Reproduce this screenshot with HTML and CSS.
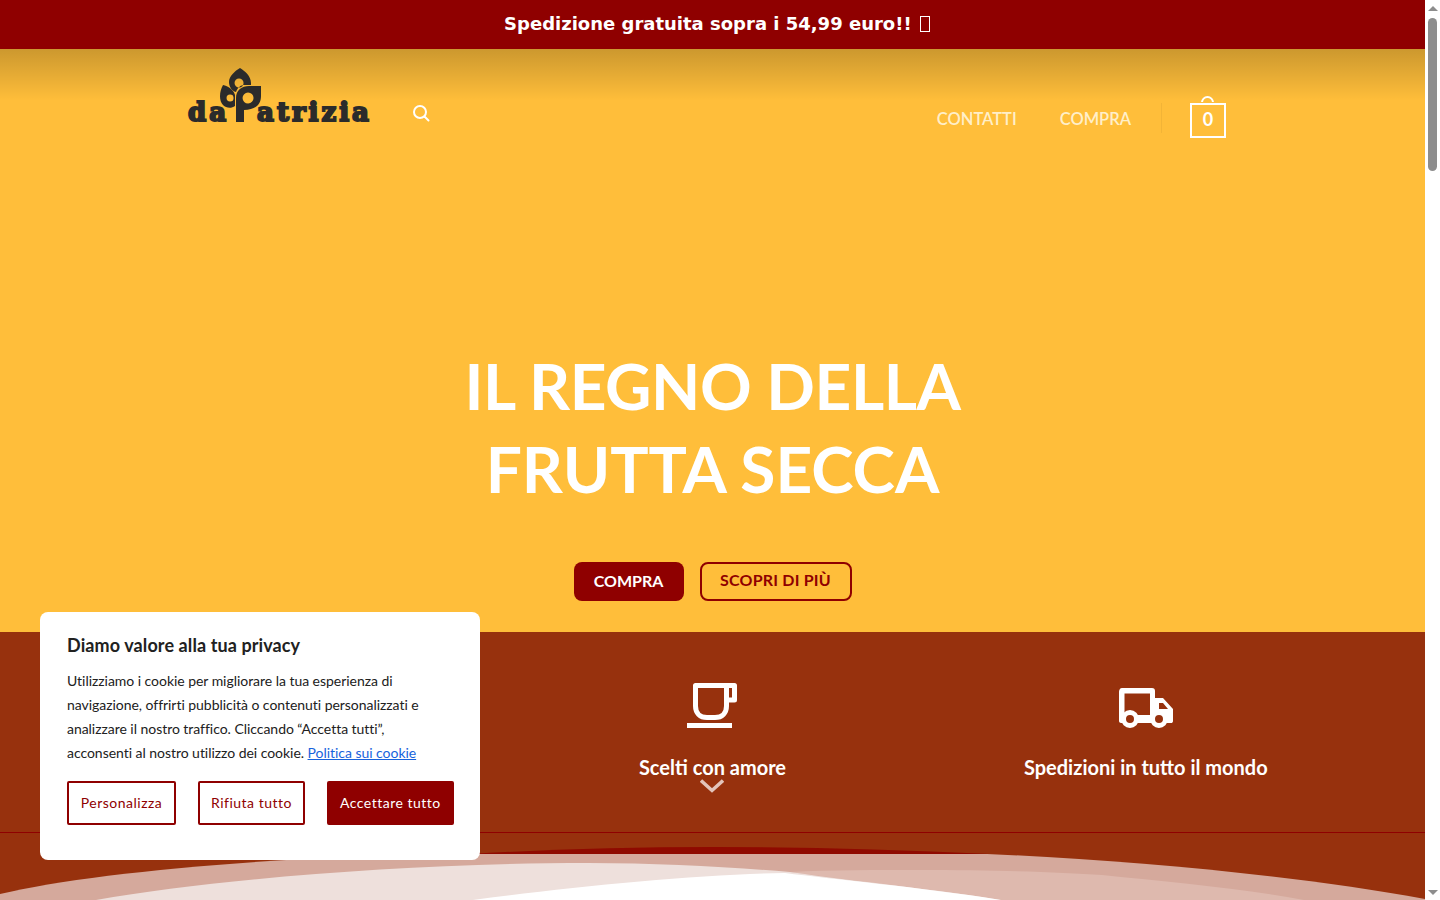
FILE: index.html
```html
<!DOCTYPE html>
<html lang="it">
<head>
    <meta charset="UTF-8">
    <meta name="viewport" content="width=device-width, initial-scale=1.0">
    <title>da Patrizia</title>
    <link rel="stylesheet" href="styles.css">
</head>
<body>
    <div class="page">
        <div class="main">
            <div class="topbar">Spedizione gratuita sopra i 54,99 euro!! <span class="tofu"></span></div>

            <section class="hero">
                <header class="header">
                    <a class="logo" href="#">
                        <span class="logo-text">da</span>
                        <svg class="logo-mark" viewBox="0 0 42 54" width="42" height="54">
                            <path fill="#2b2b2b" fill-rule="evenodd" d="M21 0C26 3 32 8 32 15V17H24C20 18 18 21 17 24C13 23 10 19 10 14C10 8 16 3 21 0ZM20 10.500A4.500 4.500 0 1 0 20.100 19.500A4.500 4.500 0 1 0 20 10.500Z"/>
                            <path fill="#2b2b2b" fill-rule="evenodd" d="M4 17C9 18 15 22 16 27V38C12 41 7 40 4 37C0 33 0 24 4 17ZM11 26.500A3.500 3.500 0 1 0 11.100 33.500A3.500 3.500 0 1 0 11 26.500Z"/>
                            <path fill="#2b2b2b" fill-rule="evenodd" d="M17 54V30C17 22 23 18 30 18H42V28C42 37 36 42 25 42V54ZM29 24.500A5.500 5.500 0 1 0 29.100 35.500A5.500 5.500 0 1 0 29 24.500Z"/>
                        </svg>
                        <span class="logo-text">atrizia</span>
                    </a>
                    <svg class="search" viewBox="0 0 18 18" width="18" height="18" fill="none" stroke="#fff" stroke-width="2" stroke-linecap="round">
                        <circle cx="8" cy="8" r="6"/>
                        <path d="M12.500 12.500L16.500 16.500"/>
                    </svg>
                    <nav class="nav">
                        <a href="#">CONTATTI</a>
                        <a href="#">COMPRA</a>
                        <span class="nav-divider"></span>
                        <span class="cart">0</span>
                    </nav>
                </header>

                <h1><span class="line-tight">IL REGNO DELLA</span><br>FRUTTA SECCA</h1>

                <div class="hero-buttons">
                    <a class="btn btn-solid" href="#">COMPRA</a>
                    <a class="btn btn-outline" href="#">SCOPRI DI PIÙ</a>
                </div>
            </section>

            <section class="band">
                <div class="features">
                    <div class="feature"></div>
                    <div class="feature">
                        <div class="feature-icon">
                            <svg viewBox="0 0 50 46" width="50" height="46" fill="none" stroke="#fff" stroke-width="5" stroke-linejoin="round">
                                <path d="M8.500 3.500H39.500V24C39.500 31 35 35.500 28 35.500H20C13 35.500 8.500 31 8.500 24Z"/>
                                <path d="M39.500 3.500H47.500V18H39.500"/>
                                <path d="M0 43.500H45"/>
                            </svg>
                        </div>
                        <h3>Scelti con amore</h3>
                        <svg class="chevron" viewBox="0 0 24 14" width="24" height="14" fill="none" stroke="#e3c4ba" stroke-width="3.500">
                            <path d="M1 1.500L12 11.500L23 1.500"/>
                        </svg>
                    </div>
                    <div class="feature">
                        <div class="feature-icon">
                            <svg viewBox="0 0 56 40" width="56" height="40">
                                <path fill="#fff" fill-rule="evenodd" d="M4 0H34C36 0 37 1 37 3V10H45L55 21V33C55 34.500 54 35 53 35H3C2 35 1 34 1 33V4C1 2 2 0 4 0ZM6.500 5.500V27H32V5.500ZM41 15V21H50L45 15Z"/>
                                <circle cx="12" cy="31" r="6.500" fill="#97310d" stroke="#fff" stroke-width="5"/>
                                <circle cx="41" cy="31" r="6.500" fill="#97310d" stroke="#fff" stroke-width="5"/>
                            </svg>
                        </div>
                        <h3>Spedizioni in tutto il mondo</h3>
                    </div>
                </div>
                <svg class="curves" viewBox="0 0 1425 68" width="1425" height="68">
                    <path fill="#8f0a00" d="M470 22Q700 8 990 22Z"/>
                    <path fill="#d5a99c" d="M0 62C90 40 300 22 477 22L987 22C1130 28 1300 44 1425 67V68H0Z"/>
                    <path fill="#deb9ae" d="M790 40C830 38 880 38 918 38C1000 38 1060 40 1102 43C1170 50 1240 56 1304 68L1001 68Z"/>
                    <path fill="#eee0dc" d="M96 68C220 46 420 31 588 31C660 31 730 35 790 40C860 50 940 58 1001 68Z"/>
                    <path fill="#fff" d="M473 68C570 55 700 42 785 41C830 47 920 55 1001 68Z"/>
                </svg>
            </section>
        </div>

        <div class="scrollbar">
            <span class="arrow-up"></span>
            <span class="thumb"></span>
            <span class="arrow-down"></span>
        </div>
    </div>

    <div class="cookie">
        <h4>Diamo valore alla tua privacy</h4>
        <p>Utilizziamo i cookie per migliorare la tua esperienza di navigazione, offrirti pubblicità o contenuti personalizzati e analizzare il nostro traffico. Cliccando “Accetta tutti”, acconsenti al nostro utilizzo dei cookie. <a href="#">Politica sui cookie</a></p>
        <div class="cookie-buttons">
            <button class="cookie-btn">Personalizza</button>
            <button class="cookie-btn">Rifiuta tutto</button>
            <button class="cookie-btn cookie-accept">Accettare tutto</button>
        </div>
    </div>
</body>
</html>
```
FILE: styles.css
```css
html, body { margin: 0; height: 100%; overflow: hidden; }
body { font-family: Lato, "Liberation Sans", sans-serif; background-color: #fff; }
a { text-decoration: none; }
.page { display: flex; width: 1440px; height: 900px; }
.main { width: 1425px; height: 900px; overflow: hidden; }

.topbar { height: 49px; line-height: 48px; padding-left: 9px; box-sizing: border-box; background-color: #8f0000; color: #fff; text-align: center; font-family: "DejaVu Sans", sans-serif; font-weight: bold; font-size: 18px; }
.tofu { display: inline-block; width: 8px; height: 14px; border: 1px solid #fff; vertical-align: -2px; margin-left: 2px; }

.hero { height: 583px; background: linear-gradient(rgba(0, 0, 0, 0.2), rgba(0, 0, 0, 0) 52px) #ffbe3a; display: flex; flex-direction: column; align-items: center; }
.header { width: 1038px; height: 90px; display: flex; align-items: flex-start; align-self: flex-start; margin-left: 188px; }
.logo { display: flex; align-items: flex-end; width: 225px; height: 54px; margin-top: 19px; }
.logo-text { font-family: "DejaVu Serif", serif; font-weight: bold; font-size: 26px; line-height: 26px; color: #2b2b2b; -webkit-text-stroke: 2px #2b2b2b; letter-spacing: 3px; margin-bottom: -3px; }
.logo-mark { margin: 0 -4px 0 -10px; flex: none; }
.search { margin-top: 55px; margin-left: -1px; }
.nav { margin-left: auto; margin-top: 54px; display: flex; align-items: flex-start; font-size: 16.500px; font-weight: 600; }
.nav a { color: #ffefc9; margin-right: 43px; line-height: 33px; }
.nav a:nth-child(2) { margin-right: 30px; }
.nav-divider { width: 1px; height: 30px; background-color: rgba(0, 0, 0, 0.05); margin-right: 28px; }
.cart { position: relative; box-sizing: border-box; width: 36px; height: 35px; border: 2.500px solid #fff; color: #fff; text-align: center; font-weight: bold; font-size: 18px; line-height: 28px; }
.cart::before { content: ""; position: absolute; left: 9px; top: -9px; width: 13px; height: 13px; box-sizing: border-box; border: 2px solid #fff; border-radius: 50%; clip-path: inset(0 0 7px 0); }

h1 { margin: 205px 0 0; color: #fff; font-size: 64px; font-weight: bold; line-height: 83px; text-align: center; }
.line-tight { letter-spacing: -0.45px; }
.hero-buttons { display: flex; gap: 16px; margin-top: 52px; }
.btn { box-sizing: border-box; height: 39px; line-height: 38px; border-radius: 8px; font-size: 16px; font-weight: bold; text-align: center; }
.btn-solid { width: 110px; background-color: #8f0000; color: #fff; }
.btn-outline { width: 152px; border: 2px solid #8f0000; color: #8f0000; line-height: 32px; letter-spacing: 0.2px; }

.band { position: relative; height: 268px; background-color: #97310d; }
.features { display: grid; grid-template-columns: repeat(3, 1fr); padding: 50px 0 0; width: 1300px; margin: 0 auto; box-sizing: border-box; height: 201px; }
.band::after { content: ""; position: absolute; left: 0; right: 0; top: 200px; height: 1px; background-color: #8f0000; }
.feature { display: flex; flex-direction: column; align-items: center; color: #fff; }
.feature-icon { height: 46px; display: flex; align-items: flex-end; }
.feature h3 { margin: 26px 0 0; font-size: 20px; line-height: 26px; font-weight: bold; }
.chevron { margin-top: -1px; }
.curves { position: absolute; left: 0; bottom: 0; }

.scrollbar { width: 15px; height: 900px; background-color: #fff; display: flex; flex-direction: column; align-items: center; }
.arrow-up { margin-top: 6px; width: 0; height: 0; border-left: 5px solid transparent; border-right: 5px solid transparent; border-bottom: 5px solid #8d8d8d; }
.thumb { width: 9px; height: 153px; margin-top: 7px; border-radius: 5px; background-color: #8d8d8d; }
.arrow-down { margin-top: auto; margin-bottom: 5px; width: 0; height: 0; border-left: 5px solid transparent; border-right: 5px solid transparent; border-top: 5px solid #8d8d8d; }

.cookie { position: fixed; left: 40px; top: 612px; width: 440px; height: 248px; box-sizing: border-box; padding: 21px 27px; background-color: #fff; border-radius: 8px; color: #212121; }
.cookie h4 { margin: 0; font-size: 18px; line-height: 24px; font-weight: bold; letter-spacing: 0.1px; }
.cookie p { margin: 12px 0 0; max-width: 370px; font-size: 14px; line-height: 24px; letter-spacing: -0.04px; }
.cookie p a { color: #1863dc; text-decoration: underline; }
.cookie-buttons { display: flex; gap: 22px; margin-top: 16px; }
.cookie-btn { height: 44px; padding: 0 11px 2px; background: #fff; border: 2px solid #8f0000; border-radius: 2px; color: #8f0000; font-family: Lato, sans-serif; font-size: 14px; letter-spacing: 0.5px; white-space: nowrap; }
.cookie-btn:first-child { min-width: 109px; }
.cookie-accept { background-color: #8f0000; color: #fff; }
```
